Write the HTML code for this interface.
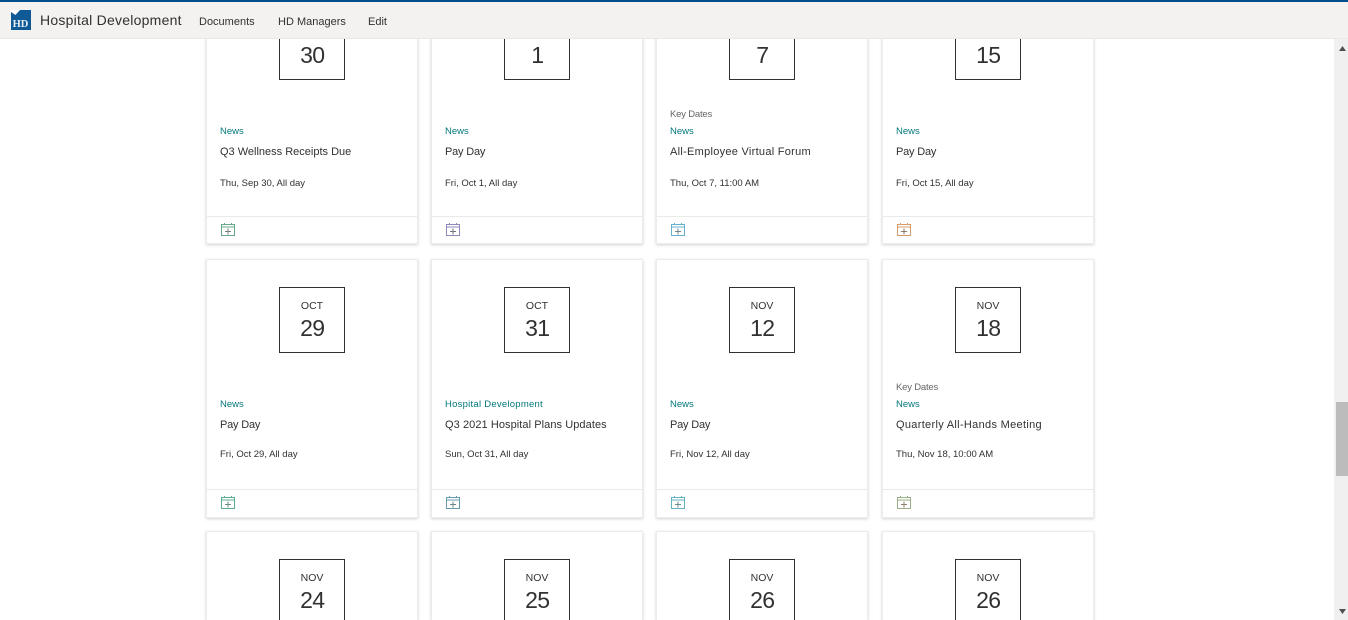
<!DOCTYPE html>
<html>
<head>
<meta charset="utf-8">
<style>
html,body{margin:0;padding:0;width:1348px;height:620px;overflow:hidden;background:#fff;font-family:"Liberation Sans",sans-serif;color:#323130}
*{box-sizing:border-box}
#page{position:relative;width:1348px;height:620px;overflow:hidden;background:#fff}
#top{position:absolute;left:0;top:0;width:1348px;height:39px;background:#f3f2f1;border-top:2px solid #004e8c;border-bottom:1px solid #e8e8e8;z-index:5}
#top span{position:absolute;white-space:nowrap}
.logo{position:absolute;left:11px;top:8px}
.site{left:40px;top:9px;font-size:14px;line-height:18px;letter-spacing:.24px}
.nav{top:12.6px;font-size:11px;line-height:15px}
#sb{position:absolute;left:1334px;top:39px;width:14px;height:581px;background:#f0f0f0;z-index:4}
#th{position:absolute;left:2px;top:363px;width:12px;height:74px;background:#bcbcbc}
.card{position:absolute;width:212px;height:259px;background:#fff;border:1px solid #ececec;box-shadow:0 1px 3px rgba(0,0,0,.18)}
.box{position:absolute;left:72px;top:27px;width:66px;height:66px;border:1px solid #323130;text-align:center}
.mon{position:absolute;left:0;width:64px;top:11px;font-size:10.5px;line-height:14px}
.day{position:absolute;left:0;width:64px;top:25px;font-size:23px;line-height:30px;letter-spacing:-.6px;text-indent:.6px}
.t{position:absolute;left:13px;white-space:nowrap}
.k{top:121px;font-size:9.5px;line-height:13px;color:#666;letter-spacing:-.2px}
.n{top:138px;font-size:9.5px;line-height:13px;color:#03787c}
.h{top:158px;font-size:11px;line-height:15px}
.d{top:188px;font-size:9.5px;line-height:13px}
.f{position:absolute;left:0;top:229px;width:210px;height:1px;background:#eaeaea}
.ic{position:absolute;left:14px;top:235px;opacity:.85}
.r1{height:258px}
.r1 .d{top:190px}
.r3{height:89px;border-bottom:0}
.r3 .box{height:61px;border-bottom:0}
</style>
</head>
<body>
<div id="page">
<div id="top">
<svg class="logo" width="20" height="20" viewBox="0 0 20 20"><rect width="20" height="20" fill="#0f5a96"/><path d="M0 0H9L4.5 5 0 2Z" fill="#fff"/><text x="9.5" y="17" text-anchor="middle" font-family="Liberation Serif" font-weight="700" font-size="10.5" fill="#e8eef4">HD</text></svg>
<span class="site">Hospital Development</span>
<span class="nav" style="left:199px">Documents</span>
<span class="nav" style="left:278px">HD Managers</span>
<span class="nav" style="left:368px">Edit</span>
</div>

<div id="sb">
<svg style="position:absolute;left:4px;top:7px" width="9" height="6"><path d="M4.5 0 8 5H1Z" fill="#505050"/></svg>
<div id="th"></div>
<svg style="position:absolute;left:4px;top:570px" width="9" height="6"><path d="M1 0H8L4.5 5Z" fill="#505050"/></svg>
</div>

<!-- row 1 -->
<div class="card r1" style="left:206px;top:-14px"><div class="box"><div class="mon">SEP</div><div class="day">30</div></div><span class="t n">News</span><span class="t h">Q3 Wellness Receipts Due</span><span class="t d">Thu, Sep 30, All day</span><div class="f"></div>
<svg class="ic" width="14" height="14" viewBox="0 0 14 14" fill="none"><path d="M.5 2.5H13.5V13.5H.5ZM.5 5H13.5M3.5 1V2.5M10.5 1V2.5" stroke="#4f9a7a"/><path d="M4 9.5H10M7 6.5V12.5" stroke="#5a6a66"/></svg></div>
<div class="card r1" style="left:431px;top:-14px"><div class="box"><div class="mon">OCT</div><div class="day">1</div></div><span class="t n">News</span><span class="t h" style="letter-spacing:-.2px">Pay Day</span><span class="t d">Fri, Oct 1, All day</span><div class="f"></div>
<svg class="ic" width="14" height="14" viewBox="0 0 14 14" fill="none"><path d="M.5 2.5H13.5V13.5H.5ZM.5 5H13.5M3.5 1V2.5M10.5 1V2.5" stroke="#7a74ad"/><path d="M4 9.5H10M7 6.5V12.5" stroke="#5a5a70"/></svg></div>
<div class="card r1" style="left:656px;top:-14px"><div class="box"><div class="mon">OCT</div><div class="day">7</div></div><span class="t k">Key Dates</span><span class="t n">News</span><span class="t h" style="letter-spacing:.28px">All-Employee Virtual Forum</span><span class="t d">Thu, Oct 7, 11:00 AM</span><div class="f"></div>
<svg class="ic" width="14" height="14" viewBox="0 0 14 14" fill="none"><path d="M.5 2.5H13.5V13.5H.5ZM.5 5H13.5M3.5 1V2.5M10.5 1V2.5" stroke="#4ba3c4"/><path d="M4 9.5H10M7 6.5V12.5" stroke="#55707a"/></svg></div>
<div class="card r1" style="left:882px;top:-14px"><div class="box"><div class="mon">OCT</div><div class="day">15</div></div><span class="t n">News</span><span class="t h" style="letter-spacing:-.2px">Pay Day</span><span class="t d">Fri, Oct 15, All day</span><div class="f"></div>
<svg class="ic" width="14" height="14" viewBox="0 0 14 14" fill="none"><path d="M.5 2.5H13.5V13.5H.5ZM.5 5H13.5M3.5 1V2.5M10.5 1V2.5" stroke="#d08a4e"/><path d="M4 9.5H10M7 6.5V12.5" stroke="#7a6250"/></svg></div>

<!-- row 2 -->
<div class="card" style="left:206px;top:259px"><div class="box"><div class="mon">OCT</div><div class="day">29</div></div><span class="t n">News</span><span class="t h" style="letter-spacing:-.2px">Pay Day</span><span class="t d">Fri, Oct 29, All day</span><div class="f"></div>
<svg class="ic" width="14" height="14" viewBox="0 0 14 14" fill="none"><path d="M.5 2.5H13.5V13.5H.5ZM.5 5H13.5M3.5 1V2.5M10.5 1V2.5" stroke="#3f9e80"/><path d="M4 9.5H10M7 6.5V12.5" stroke="#4f7a6c"/></svg></div>
<div class="card" style="left:431px;top:259px"><div class="box"><div class="mon">OCT</div><div class="day">31</div></div><span class="t n" style="letter-spacing:.25px">Hospital Development</span><span class="t h" style="letter-spacing:.07px">Q3 2021 Hospital Plans Updates</span><span class="t d">Sun, Oct 31, All day</span><div class="f"></div>
<svg class="ic" width="14" height="14" viewBox="0 0 14 14" fill="none"><path d="M.5 2.5H13.5V13.5H.5ZM.5 5H13.5M3.5 1V2.5M10.5 1V2.5" stroke="#4c8aa0"/><path d="M4 9.5H10M7 6.5V12.5" stroke="#50707a"/></svg></div>
<div class="card" style="left:656px;top:259px"><div class="box"><div class="mon">NOV</div><div class="day">12</div></div><span class="t n">News</span><span class="t h" style="letter-spacing:-.2px">Pay Day</span><span class="t d">Fri, Nov 12, All day</span><div class="f"></div>
<svg class="ic" width="14" height="14" viewBox="0 0 14 14" fill="none"><path d="M.5 2.5H13.5V13.5H.5ZM.5 5H13.5M3.5 1V2.5M10.5 1V2.5" stroke="#4ba3b4"/><path d="M4 9.5H10M7 6.5V12.5" stroke="#507a80"/></svg></div>
<div class="card" style="left:882px;top:259px"><div class="box"><div class="mon">NOV</div><div class="day">18</div></div><span class="t k">Key Dates</span><span class="t n">News</span><span class="t h" style="letter-spacing:.31px">Quarterly All-Hands Meeting</span><span class="t d">Thu, Nov 18, 10:00 AM</span><div class="f"></div>
<svg class="ic" width="14" height="14" viewBox="0 0 14 14" fill="none"><path d="M.5 2.5H13.5V13.5H.5ZM.5 5H13.5M3.5 1V2.5M10.5 1V2.5" stroke="#8aa070"/><path d="M4 9.5H10M7 6.5V12.5" stroke="#7a6a50"/></svg></div>

<!-- row 3 -->
<div class="card r3" style="left:206px;top:531px"><div class="box"><div class="mon">NOV</div><div class="day">24</div></div></div>
<div class="card r3" style="left:431px;top:531px"><div class="box"><div class="mon">NOV</div><div class="day">25</div></div></div>
<div class="card r3" style="left:656px;top:531px"><div class="box"><div class="mon">NOV</div><div class="day">26</div></div></div>
<div class="card r3" style="left:882px;top:531px"><div class="box"><div class="mon">NOV</div><div class="day">26</div></div></div>
</div>
</body>
</html>
